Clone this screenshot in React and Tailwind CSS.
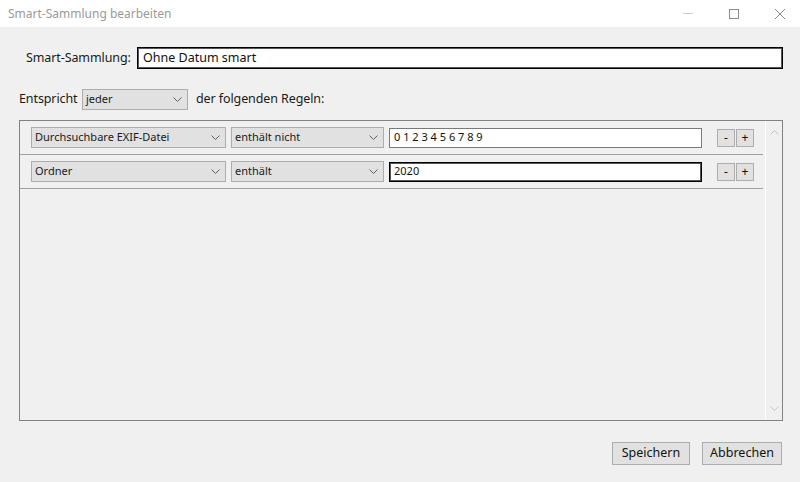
import React from 'react'

const font = { fontFamily: '"Noto Sans", "Open Sans", Arial, sans-serif' }

function Chevron({ className = '' }) {
    return (
        <svg className={className} width="9" height="6" viewBox="0 0 9 6" fill="none" stroke="currentColor" strokeWidth="1">
            <path d="M0.5 0.5 L4.5 4.5 L8.5 0.5" />
        </svg>
    )
}

function Select({ value, className = '' }) {
    return (
        <div className={`h-[21px] shrink-0 flex items-center justify-between bg-[#e1e1e1] border border-[#adadad] pl-[3px] pr-[5px] text-[11px] text-[#1a1a1a] ${className}`}>
            <span>{value}</span>
            <Chevron className="text-[#606060]" />
        </div>
    )
}

function SmallButton({ children }) {
    return (
        <div className="w-[18px] h-[18px] flex items-center justify-center bg-[#e1e1e1] border border-[#adadad] text-[12px] text-[#111] leading-none">
            {children}
        </div>
    )
}

function RuleRow({ field, op, value, focused }) {
    return (
        <div className="border-b border-[#a0a0a0] mr-[2px]">
            <div className="h-[33px] flex items-center pl-[11px]">
                <Select value={field} className="w-[195px]" />
                <Select value={op} className="w-[153px] ml-[5px]" />
                <div className={`w-[313px] h-[20px] ml-[5px] bg-white flex items-center pl-[4px] text-[11px] text-[#111] ${focused ? 'border border-black shadow-[inset_0_0_0_1px_#555]' : 'border border-[#7a7a7a]'}`}>
                    {value}
                </div>
                <div className="ml-[15px] flex gap-[1px]">
                    <SmallButton>-</SmallButton>
                    <SmallButton>+</SmallButton>
                </div>
            </div>
        </div>
    )
}

export default function App() {
    return (
        <div className="w-[800px] h-[482px] bg-[#f0f0f0] flex flex-col overflow-hidden" style={font}>

            {/* Title bar */}
            <div className="h-[27px] bg-white flex items-center justify-between shrink-0">
                <span className="pl-[8px] text-[12px] text-[#9a9a9a]">Smart-Sammlung bearbeiten</span>
                <div className="flex items-center gap-[36px] pr-[15px]">
                    <div className="w-[10px] h-[1px] bg-[#d0d0d0]" />
                    <div className="w-[10px] h-[10px] border border-[#8a8a8a]" />
                    <svg width="10" height="10" viewBox="0 0 10 10" stroke="#8a8a8a" strokeWidth="1">
                        <path d="M0 0 L10 10 M10 0 L0 10" />
                    </svg>
                </div>
            </div>

            {/* Name */}
            <div className="flex items-center mt-[20px] pl-[26px] pr-[17px]">
                <span className="w-[111px] shrink-0 whitespace-nowrap text-[12.5px] tracking-[-0.1px] text-[#1a1a1a]">Smart-Sammlung:</span>
                <div className="flex-1 h-[22px] bg-white border border-black shadow-[inset_0_0_0_1px_#555] flex items-center pl-[5px] text-[12.5px] text-[#111]">
                    Ohne Datum smart
                </div>
            </div>

            {/* Match */}
            <div className="flex items-center mt-[20px] pl-[19px]">
                <span className="w-[63px] shrink-0 whitespace-nowrap text-[12.5px] tracking-[-0.1px] text-[#1a1a1a]">Entspricht</span>
                <Select value="jeder" className="w-[106px]" />
                <span className="ml-[8px] text-[12.5px] tracking-[-0.1px] text-[#1a1a1a]">der folgenden Regeln:</span>
            </div>

            {/* Rules panel */}
            <div className="mt-[10px] ml-[19px] w-[764px] h-[301px] border border-[#828282] flex">
                <div className="flex-1 flex flex-col">
                    <RuleRow field="Durchsuchbare EXIF-Datei" op="enthält nicht" value="0 1 2 3 4 5 6 7 8 9" />
                    <RuleRow field="Ordner" op="enthält" value="2020" focused />
                </div>
                <div className="w-[17px] border-l border-white flex flex-col items-center justify-between py-[8px] text-[#c2c2c2]">
                    <Chevron className="rotate-180" />
                    <Chevron />
                </div>
            </div>

            {/* Buttons */}
            <div className="flex justify-end gap-[12px] mt-[21px] pr-[18px]">
                <div className="w-[78px] h-[23px] bg-[#e1e1e1] border border-[#adadad] flex items-center justify-center text-[12.5px] text-[#111]">
                    Speichern
                </div>
                <div className="w-[80px] h-[23px] bg-[#e1e1e1] border border-[#adadad] flex items-center justify-center text-[12.5px] text-[#111]">
                    Abbrechen
                </div>
            </div>
        </div>
    )
}
